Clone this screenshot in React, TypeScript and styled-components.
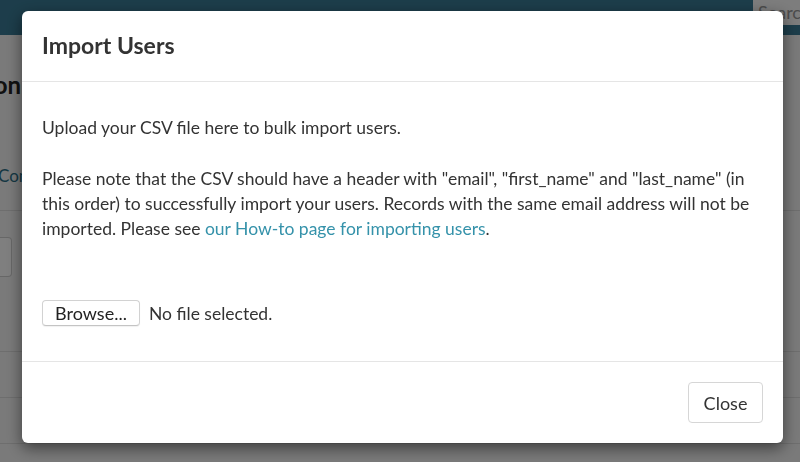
import React from "react";
import styled, { createGlobalStyle } from "styled-components";

const Global = createGlobalStyle`
  html, body { margin: 0; padding: 0; }
  body {
    font-family: Lato, "Open Sans", "Liberation Sans", sans-serif;
    background: #f4f4f4;
    color: #333;
    overflow: hidden;
  }
`;

const Page = styled.div`
  width: 800px;
  height: 462px;
  overflow: hidden;
  background: #f4f4f4;
`;

const NavBar = styled.header`
  height: 35px;
  background: #3a7b96;
  display: flex;
  justify-content: flex-end;
  align-items: flex-start;
`;

const SearchBox = styled.div`
  width: 47px;
  height: 25px;
  background: #fafafa;
  color: #999;
  font-size: 18px;
  line-height: 25px;
  padding-left: 5px;
  box-sizing: border-box;
  overflow: hidden;
  white-space: nowrap;
`;

const Content = styled.main`
  display: flex;
  flex-direction: column;
`;

const PageTitle = styled.h1`
  margin: 0;
  padding-top: 30px;
  width: 21px;
  display: flex;
  justify-content: flex-end;
  font-size: 24px;
  font-weight: 700;
  line-height: 40px;
  color: #222;
  white-space: nowrap;
`;

const SubNav = styled.div`
  padding: 52px 0 16px;
  line-height: 37px;
  font-size: 17px;
  color: #2b6f86;
  text-indent: -2px;
  white-space: nowrap;
  border-bottom: 1px solid #dcdcdc;
`;

const Toolbar = styled.div`
  height: 141px;
  padding-top: 26px;
  box-sizing: border-box;
  border-bottom: 1px solid #dcdcdc;
`;

const FilterBox = styled.div`
  width: 12px;
  height: 40px;
  box-sizing: border-box;
  border: 1px solid #cfcfcf;
  border-left: none;
  border-radius: 0 4px 4px 0;
  background: #fff;
`;

const Row = styled.div`
  height: 46px;
  box-sizing: border-box;
  border-bottom: 1px solid #dcdcdc;
  display: flex;
  align-items: flex-end;
  padding-left: 430px;
  font-size: 14px;
  color: #444;
`;

const Overlay = styled.div`
  position: fixed;
  inset: 0;
  background: rgba(0, 0, 0, 0.5);
`;

const Modal = styled.div`
  position: fixed;
  left: 22px;
  top: 11px;
  width: 761px;
  height: 432px;
  background: #fff;
  border-radius: 6px;
  box-shadow: 0 5px 15px rgba(0, 0, 0, 0.5);
  display: flex;
  flex-direction: column;
  overflow: hidden;
`;

const ModalHeader = styled.div`
  height: 71px;
  box-sizing: border-box;
  padding: 0 20px 2px;
  display: flex;
  align-items: center;
  border-bottom: 1px solid #e5e5e5;
`;

const ModalTitle = styled.h4`
  margin: 0;
  font-size: 23px;
  font-weight: 700;
  color: #333;
  line-height: 1;
`;

const ModalBody = styled.div`
  flex: 1;
  padding: 33px 20px 0;
  display: flex;
  flex-direction: column;
`;

const Paragraph = styled.p`
  margin: 0 0 26px;
  font-size: 17.5px;
  line-height: 25px;
  color: #333;
  white-space: nowrap;
`;

const Link = styled.a`
  color: #3592aa;
  text-decoration: none;
`;

const FileRow = styled.div`
  margin-top: 33px;
  display: flex;
  align-items: center;
  gap: 9px;
`;

const BrowseButton = styled.button`
  width: 98px;
  height: 26px;
  box-sizing: border-box;
  border: 1px solid #d2d2d2;
  border-bottom-color: #c4c4c4;
  border-radius: 4px;
  background: #fff;
  box-shadow: 0 1px 1px rgba(0, 0, 0, 0.06);
  font-family: Lato, "Liberation Sans", sans-serif;
  font-size: 18px;
  color: #222;
  padding: 0;
`;

const FileLabel = styled.span`
  font-size: 17.5px;
  color: #333;
`;

const ModalFooter = styled.div`
  height: 82px;
  box-sizing: border-box;
  border-top: 1px solid #e5e5e5;
  padding: 20px;
  display: flex;
  justify-content: flex-end;
`;

const CloseButton = styled.button`
  width: 75px;
  height: 41px;
  box-sizing: border-box;
  border: 1px solid #d6d6d6;
  border-radius: 4px;
  background: #fff;
  font-family: Lato, "Liberation Sans", sans-serif;
  font-size: 18px;
  color: #333;
  padding: 0;
`;

export default function App() {
  return (
    <>
      <Global />
      <Page>
        <NavBar>
          <SearchBox>Search</SearchBox>
        </NavBar>
        <Content>
          <PageTitle>Organization</PageTitle>
          <SubNav>Company</SubNav>
          <Toolbar>
            <FilterBox />
          </Toolbar>
          <Row />
          <Row>Name &nbsp; Email address</Row>
        </Content>
      </Page>
      <Overlay />
      <Modal>
        <ModalHeader>
          <ModalTitle>Import Users</ModalTitle>
        </ModalHeader>
        <ModalBody>
          <Paragraph>Upload your CSV file here to bulk import users.</Paragraph>
          <Paragraph>
            Please note that the CSV should have a header with "email", "first_name" and "last_name" (in
            <br />
            this order) to successfully import your users. Records with the same email address will not be
            <br />
            imported. Please see <Link href="#">our How-to page for importing users</Link>.
          </Paragraph>
          <FileRow>
            <BrowseButton type="button">Browse...</BrowseButton>
            <FileLabel>No file selected.</FileLabel>
          </FileRow>
        </ModalBody>
        <ModalFooter>
          <CloseButton type="button">Close</CloseButton>
        </ModalFooter>
      </Modal>
    </>
  );
}
